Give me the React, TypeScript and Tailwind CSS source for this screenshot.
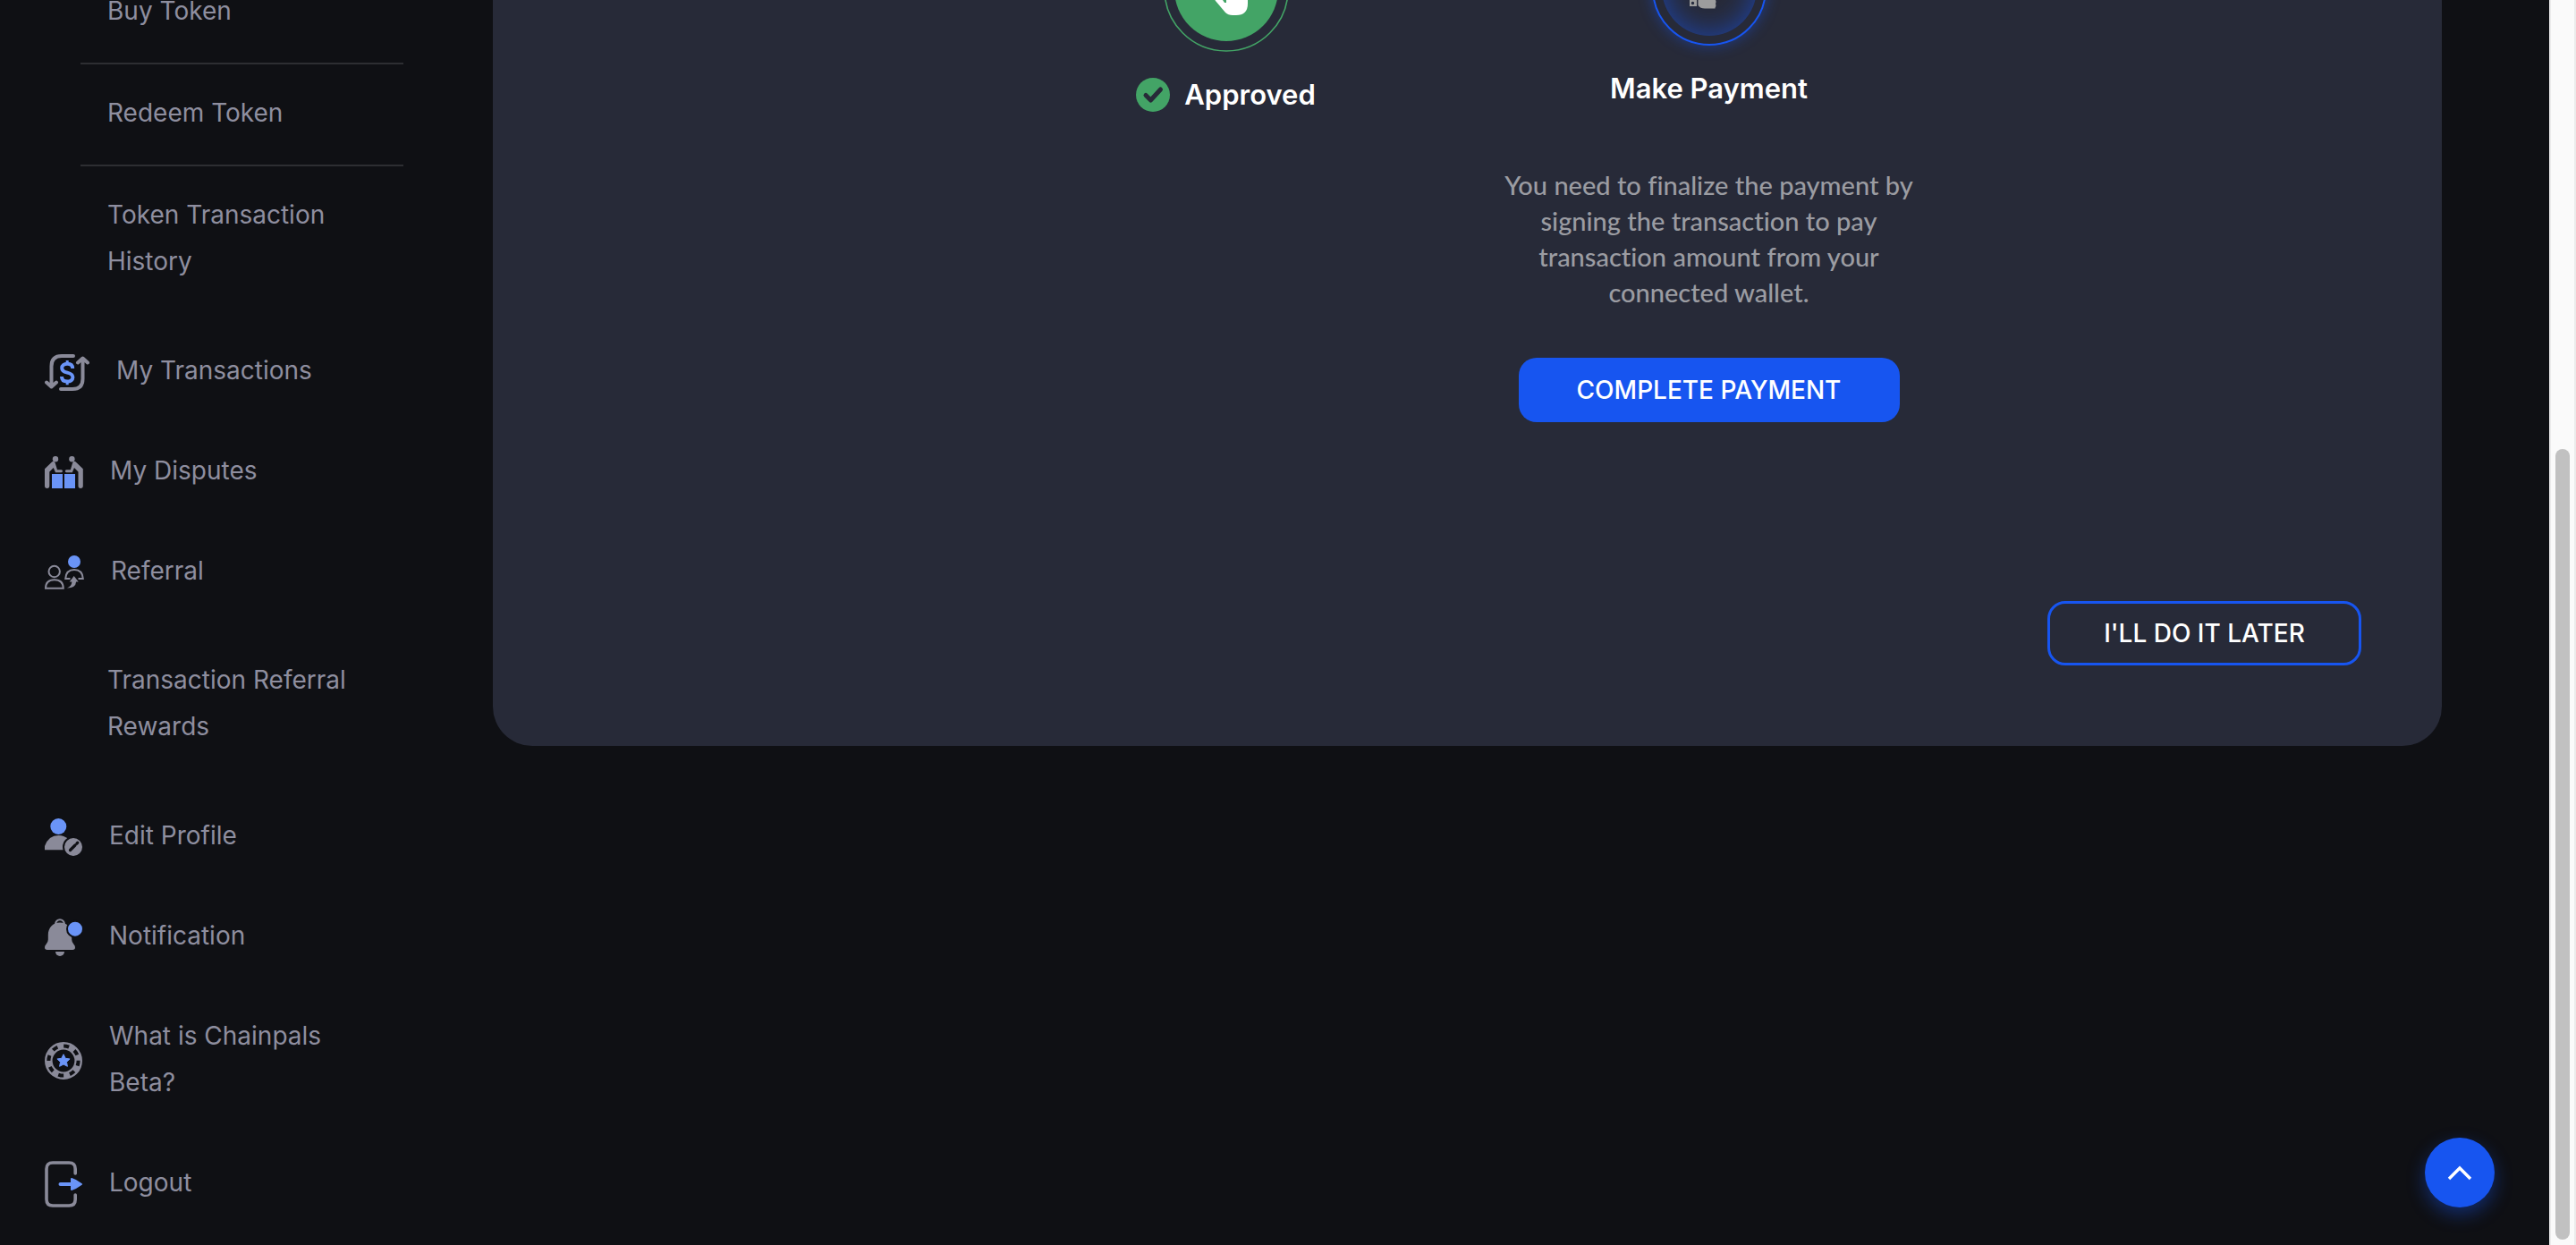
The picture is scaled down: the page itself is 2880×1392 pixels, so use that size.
import type { ReactNode } from "react";

function TransactionsIcon() {
  return (
    <svg width="50" height="41" viewBox="0 0 50 41" fill="none" strokeWidth="4" strokeLinecap="round" strokeLinejoin="round">
      <g stroke="#8a8a99">
        <path d="M32 2H19Q7.5 2 7.5 13.5V36M2 31.5l5.5 5 5.5-5" />
        <path d="M18 39H31Q42.5 39 42.5 27.5V5M37 9.5l5.5-5 5.5 5" />
      </g>
      <path
        stroke="#6a94f7"
        strokeLinecap="butt"
        d="M31.2 16C31.2 12.3 28.6 10.8 25.2 10.8C21.6 10.8 19.2 12.6 19.2 15.4C19.2 18.8 22 19.8 25.2 20.6C28.6 21.4 31.4 22.8 31.4 25.8C31.4 28.8 28.8 30.6 25.2 30.6C21.6 30.6 19 28.8 19 25"
      />
      <path stroke="#6a94f7" strokeWidth="3" strokeLinecap="butt" d="M25.2 7v4M25.2 30v4.2" />
    </svg>
  );
}

function DisputesIcon() {
  const person =
    "M8.3 6.2Q10.8 4.6 11.8 8L14 15.3H18.6Q20 15.3 20 16.8Q20 18.2 18.6 18.2H12L9.8 13L5.3 17.5V33.3Q5.3 36 2.7 36Q0 36 0 33.3V14.3Z";
  return (
    <svg width="43" height="36" viewBox="0 0 43 36" fill="#8a8a99">
      <circle cx="12" cy="3.2" r="3.2" />
      <path d={person} />
      <g transform="translate(42.8 0) scale(-1 1)">
        <circle cx="12.4" cy="3.2" r="3.2" />
        <path d={person} />
      </g>
      <path fill="#6a94f7" d="M8 20h12v16H8zM22 20h12v16H22z" />
    </svg>
  );
}

function ReferralIcon() {
  return (
    <svg width="44" height="38" viewBox="0 0 44 38" fill="none" stroke="#8a8a99" strokeWidth="2">
      <circle cx="33" cy="7" r="7" fill="#6a94f7" stroke="none" />
      <circle cx="10.7" cy="18" r="6.2" />
      <path d="M1 36.8Q1 27.3 10.8 27.3T20.8 36.8Z" />
      <path d="M28.5 26H23.2Q23.8 16 33 16T42.8 26H37.5" />
      <path
        d="M32.7 23l5 6.5h-2.600Q34.6 36.5 25 36.400Q30 34.6 30.4 29.5H27.7Z"
        fill="#8a8a99"
        stroke="none"
      />
    </svg>
  );
}

function EditProfileIcon() {
  return (
    <svg width="42" height="42" viewBox="0 0 42 42" fill="#8a8a99">
      <circle cx="15.3" cy="9" r="9" fill="#6a94f7" />
      <path d="M0 35.3V31Q4.2 19 15.5 19Q21.5 19 26 23V35.3Z" />
      <circle cx="32" cy="32" r="11" stroke="#0f1014" strokeWidth="2" />
      <path d="M28.5 35.5l5.5-5.5M36 28l.8-.8" stroke="#0f1014" strokeWidth="3.2" strokeLinecap="round" />
    </svg>
  );
}

function NotificationIcon() {
  return (
    <svg width="42" height="42" viewBox="0 0 42 42" fill="#8a8a99">
      <path d="M12 6.5a5 5.3 0 0 1 10 0" fill="none" stroke="#8a8a99" strokeWidth="2" />
      <path d="M17 4.5C9 4.5 3.8 10.5 3.8 18.5V23.5Q3.8 26.5 1.4 29Q0 30.4 0 32.3Q0 35 2.8 35H31.2Q34 35 34 32.3Q34 30.4 32.6 29Q30.2 26.5 30.2 23.5V18.5C30.2 10.5 25 4.5 17 4.5Z" />
      <path d="M12 37h10a5 5 0 0 1-10 0z" />
      <circle cx="34" cy="11.7" r="9" fill="#6a94f7" stroke="#0f1014" strokeWidth="2" />
    </svg>
  );
}

function ChipIcon() {
  return (
    <svg width="42" height="42" viewBox="0 0 42 42" fill="none">
      <circle cx="21" cy="21" r="16.7" stroke="#8a8a99" strokeWidth="8.6" />
      <circle
        cx="21"
        cy="21"
        r="16.6"
        stroke="#0f1014"
        strokeWidth="4"
        strokeDasharray="6 7.04"
        transform="rotate(-1 21 21)"
      />
      <path
        fill="#6a94f7"
        stroke="#6a94f7"
        strokeLinejoin="round"
        d="M21 13.8l2.2 4.5 4.9.7-3.6 3.4.9 4.9-4.4-2.3-4.4 2.3.9-4.9-3.6-3.4 4.9-.7z"
      />
    </svg>
  );
}

function LogoutIcon() {
  return (
    <svg width="42" height="52" viewBox="0 0 42 52" fill="none" strokeLinecap="round" strokeLinejoin="round">
      <path
        stroke="#8a8a99"
        strokeWidth="3.6"
        d="M34.2 14V9Q34.2 2 27.2 2H9Q2 2 2 9V43Q2 50 9 50H27.2Q34.2 50 34.2 43V38"
      />
      <path stroke="#6a94f7" strokeWidth="4" d="M17.5 26H30" />
      <path stroke="#6a94f7" strokeWidth="2" fill="#6a94f7" d="M30 20v12q5-1.6 11-6q-6-4.4-11-6z" />
    </svg>
  );
}

function ApprovedBadge() {
  return (
    <svg width="140" height="140" viewBox="0 0 140 140">
      <circle cx="70" cy="70" r="69" fill="none" stroke="#43a466" strokeWidth="1.6" />
      <circle cx="70" cy="70" r="58" fill="#43a466" />
      <path
        fill="#fff"
        d="M62 50a4 4 0 0 1 8 0v14h16q8 0 8 8v14q0 13-13 13h-4q-5 0-8-3L58 83q-2-3 1-5t5 1l4 6h2V64l-8-4z"
      />
    </svg>
  );
}

function PaymentBadge() {
  return (
    <div className="flex size-32 items-center justify-center rounded-full border-2 border-[#1755f0] shadow-[0_0_16px_rgba(23,85,240,0.45)]">
      <div className="flex size-[106px] items-center justify-center rounded-full shadow-[inset_0_0_32px_rgba(23,85,240,0.6)]">
        <svg width="106" height="106" viewBox="0 0 106 106" fill="#9d9d9d">
          <path fillRule="evenodd" d="M31 50h8v23h-8zM34.5 67.8a1.7 1.7 0 1 0 0 3.4a1.7 1.7 0 1 0 0-3.4z" />
          <path d="M40.500 50H60v16q1 2 0 4q1 3-.5 4.500q.5 1-1 1H48q-5 0-7.500-3.500z" />
        </svg>
      </div>
    </div>
  );
}

function CheckMark() {
  return (
    <svg width="38" height="38" viewBox="0 0 38 38" fill="none" className="shrink-0">
      <circle cx="19" cy="19" r="19" fill="#43a466" />
      <path d="M11 19.500l5.500 5.500L27.500 13" stroke="#272a38" strokeWidth="5" strokeLinecap="round" strokeLinejoin="round" />
    </svg>
  );
}

function NavLink({ icon, children }: { icon: ReactNode; children: ReactNode }) {
  return (
    <a href="#" className="flex items-center gap-[30px]">
      <span className="flex shrink-0 translate-y-0.5">{icon}</span>
      <span className="max-w-[301px]">{children}</span>
    </a>
  );
}

function SubMenu({ items }: { items: string[] }) {
  return (
    <ul className="my-[10px] ml-10 divide-y-2 divide-[#2d2e32]">
      {items.map((item) => (
        <li key={item} className="px-[30px] pt-7 pb-8 first:pt-0 last:pb-0">
          <a href="#" className="block">
            {item}
          </a>
        </li>
      ))}
    </ul>
  );
}

export default function App() {
  return (
    <div className="flex h-screen overflow-hidden bg-[#0f1014] font-['Inter',sans-serif]">
      <aside className="w-[551px] shrink-0 pr-[100px] pl-[50px] text-[28px] leading-[52px] text-[#8e8e9f]">
        <nav className="-mt-6 flex flex-col gap-[60px]">
          <SubMenu items={["Buy Token", "Redeem Token", "Token Transaction History"]} />
          <NavLink icon={<TransactionsIcon />}>My Transactions</NavLink>
          <NavLink icon={<DisputesIcon />}>My Disputes</NavLink>
          <NavLink icon={<ReferralIcon />}>Referral</NavLink>
          <SubMenu items={["Transaction Referral Rewards"]} />
          <NavLink icon={<EditProfileIcon />}>Edit Profile</NavLink>
          <NavLink icon={<NotificationIcon />}>Notification</NavLink>
          <NavLink icon={<ChipIcon />}>What is Chainpals Beta?</NavLink>
          <NavLink icon={<LogoutIcon />}>Logout</NavLink>
        </nav>
      </aside>

      <main className="relative flex-1 pr-[120px]">
        <section className="overflow-hidden rounded-b-[44px] bg-[#272a38] pb-[90px]">
          <div className="-mt-[82px] flex justify-center text-center">
            <div className="flex w-[540px] flex-col items-center gap-7">
              <ApprovedBadge />
              <div className="flex items-center gap-4">
                <CheckMark />
                <h2 className="text-[31px] leading-10 font-semibold text-white">Approved</h2>
              </div>
            </div>
            <div className="flex w-[540px] flex-col items-center px-[30px] pt-[5px]">
              <PaymentBadge />
              <h2 className="mt-7 text-[31px] leading-10 font-semibold text-white">Make Payment</h2>
              <p className="mt-[68px] font-['Lato',sans-serif] text-[29px] leading-10 font-medium text-[#9b9ca2] [font-variant-ligatures:none]">
                You need to finalize the payment by signing the transaction to pay transaction amount from your
                connected wallet.
              </p>
              <button
                type="button"
                className="mt-[53px] h-[72px] w-[426px] rounded-[20px] bg-[#1755f0] text-[28px] font-medium text-white"
              >
                COMPLETE PAYMENT
              </button>
            </div>
          </div>
          <div className="mt-[200px] flex justify-end pr-[90px]">
            <button
              type="button"
              className="h-[72px] w-[351px] rounded-[20px] border-3 border-[#1755f0] text-[28px] font-medium text-white"
            >
              I'LL DO IT LATER
            </button>
          </div>
        </section>

        <button
          type="button"
          aria-label="Back to top"
          className="absolute right-[61px] bottom-[42px] flex size-[78px] items-center justify-center rounded-full bg-[#1755f0] shadow-[0_8px_20px_rgba(23,85,240,0.4)]"
        >
          <svg width="28" height="18" viewBox="0 0 28 18" fill="none" stroke="#fff" strokeWidth="3.4">
            <path d="M2 16L14 4l12 12" />
          </svg>
        </button>
      </main>

      <div className="flex w-[30px] shrink-0 justify-center border-x-2 border-[#ebebeb] bg-[#fafafa] pt-[502px] pb-[6px]">
        <div className="w-4 rounded-full bg-[#c1c1c1]" />
      </div>
    </div>
  );
}
